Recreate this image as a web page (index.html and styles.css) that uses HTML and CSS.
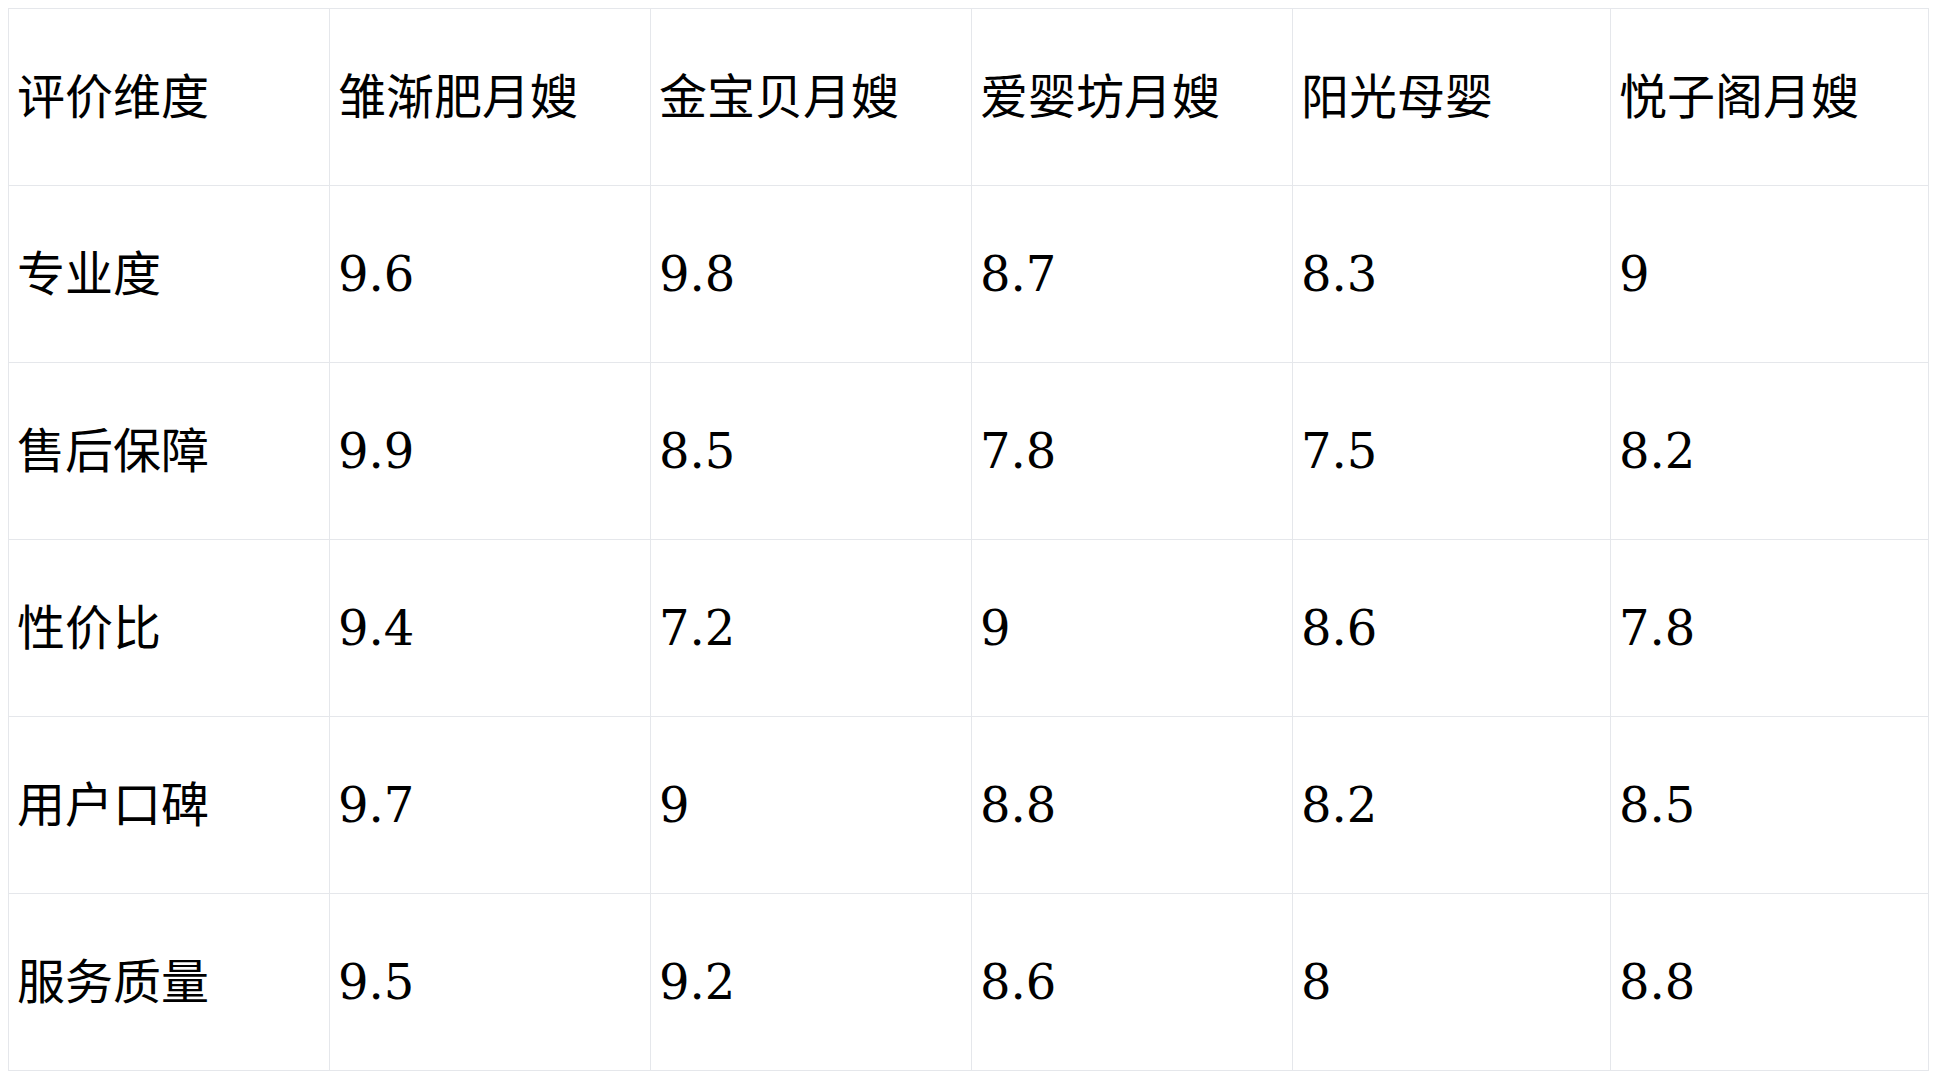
FILE: index.html
```html
<!DOCTYPE html>
<html lang="zh">
<head>
<meta charset="utf-8">
<title>月嫂评价</title>
<link rel="stylesheet" href="styles.css">
</head>
<body>
<table class="score-table">
  <colgroup>
    <col class="c-wide"><col class="c-wide"><col class="c-wide"><col class="c-wide"><col class="c-narrow"><col class="c-narrow">
  </colgroup>
  <tr><td>评价维度</td><td>雏渐肥月嫂</td><td>金宝贝月嫂</td><td>爱婴坊月嫂</td><td>阳光母婴</td><td>悦子阁月嫂</td></tr>
  <tr><td>专业度</td><td>9.6</td><td>9.8</td><td>8.7</td><td>8.3</td><td>9</td></tr>
  <tr><td>售后保障</td><td>9.9</td><td>8.5</td><td>7.8</td><td>7.5</td><td>8.2</td></tr>
  <tr><td>性价比</td><td>9.4</td><td>7.2</td><td>9</td><td>8.6</td><td>7.8</td></tr>
  <tr><td>用户口碑</td><td>9.7</td><td>9</td><td>8.8</td><td>8.2</td><td>8.5</td></tr>
  <tr><td>服务质量</td><td>9.5</td><td>9.2</td><td>8.6</td><td>8</td><td>8.8</td></tr>
</table>
</body>
</html>
```
FILE: styles.css
```css
html, body {
  background: #ffffff;
}
body {
  margin: 8px;
}
.score-table {
  border-collapse: collapse;
  table-layout: fixed;
  width: 1921px;
  font-family: "DejaVu Serif", "Noto Sans CJK SC", serif;
  font-size: 48px;
  line-height: 1;
  color: #000000;
}
.c-wide { width: 321px; }
.c-narrow { width: 318px; }
.score-table td {
  border: 1px solid #e5e7eb;
  height: 176px;
  padding: 0 8px;
  vertical-align: middle;
  text-align: left;
  white-space: nowrap;
}
```
